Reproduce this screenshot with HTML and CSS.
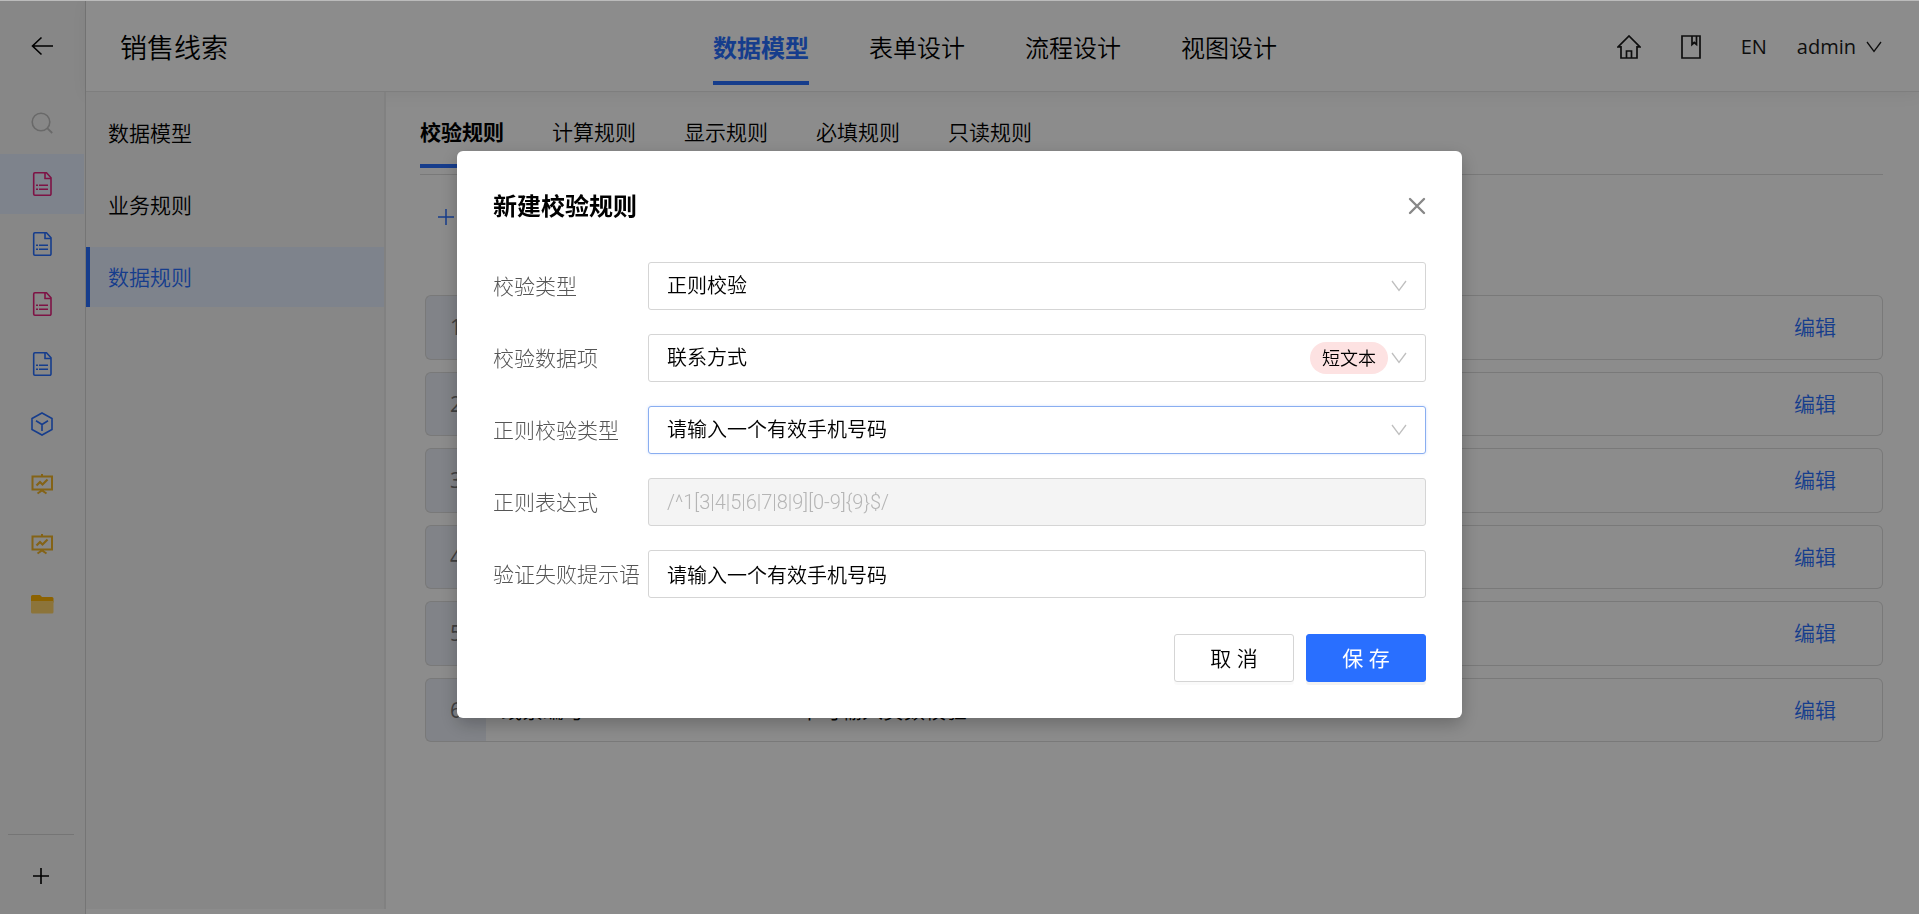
FILE: index.html
```html
<!DOCTYPE html>
<html lang="zh-CN">
<head>
  <meta charset="UTF-8">
  <title>销售线索</title>
  <link rel="stylesheet" href="styles.css">
</head>
<body>
  <svg class="sprite" aria-hidden="true">
    <symbol id="doc" viewBox="0 0 24 24">
      <path d="M4.900.8h11.600L21 5.800V22a1.200 1.200 0 0 1-1.200 1.200H4.900A1.200 1.200 0 0 1 3.700 22V2A1.200 1.200 0 0 1 4.900.8z" fill="none" stroke="currentColor" stroke-width="1.600"/>
      <path d="M15 1v5.500h6" fill="none" stroke="currentColor" stroke-width="1.600"/>
      <path d="M6 13.200h2M9 13.200h9M6 17.200h2M9 17.200h9" stroke="currentColor" stroke-width="1.600"/>
    </symbol>
    <symbol id="board" viewBox="0 0 24 24">
      <path d="M2.500 4.500h19.500v13h-19.500zM12 2v2.500M12 17.500v2M7.500 21.500l4.500-3 4.500 3" fill="none" stroke="currentColor" stroke-width="2"/>
      <path d="M6.500 13.500l3.500-3.500 2.500 2.500 5-5" fill="none" stroke="currentColor" stroke-width="2.200"/>
    </symbol>
    <symbol id="down" viewBox="0 0 16 16">
      <path d="M1 3l7 9.500L15 3" fill="none" stroke="currentColor" stroke-width="1.300"/>
    </symbol>
  </svg>

  <div class="app">
    <aside class="rail">
      <a class="rail-back" href="#" aria-label="返回"><svg width="24" height="24" viewBox="0 0 24 24"><path d="M11.500 3.500L2.500 12l9 8.500M2.500 12h20.500" fill="none" stroke="currentColor" stroke-width="1.600"/></svg></a>
      <a class="rail-search" href="#" aria-label="搜索"><svg width="24" height="24" viewBox="0 0 24 24"><circle cx="11" cy="11" r="8.800" fill="none" stroke="currentColor" stroke-width="1.600"/><path d="M17.200 17.200l5 4.800" stroke="currentColor" stroke-width="1.800"/></svg></a>
      <nav class="rail-nav">
        <a class="pink active" href="#" aria-label="表单"><svg width="24" height="24"><use href="#doc"/></svg></a>
        <a class="blue" href="#" aria-label="表单"><svg width="24" height="24"><use href="#doc"/></svg></a>
        <a class="pink" href="#" aria-label="表单"><svg width="24" height="24"><use href="#doc"/></svg></a>
        <a class="blue" href="#" aria-label="表单"><svg width="24" height="24"><use href="#doc"/></svg></a>
        <a class="blue" href="#" aria-label="模型"><svg width="24" height="24" viewBox="0 0 24 24"><path d="M12 1l10 5.500v11L12 23 2 17.500v-11zM6 8.800l6 3.700 6-3.700M12 12.500V19" fill="none" stroke="currentColor" stroke-width="1.600"/></svg></a>
        <a class="gold" href="#" aria-label="报表"><svg width="24" height="24"><use href="#board"/></svg></a>
        <a class="gold" href="#" aria-label="报表"><svg width="24" height="24"><use href="#board"/></svg></a>
        <a class="gold" href="#" aria-label="文件夹"><svg width="24" height="24" viewBox="0 0 24 24"><path d="M1 4.500a1.500 1.500 0 0 1 1.500-1.500h7.500l2 2H22A1.500 1.500 0 0 1 23.500 6.500v4H1z" fill="#ffb300"/><path d="M1 9h22.500v11A1.500 1.500 0 0 1 22 21.500H2.500A1.500 1.500 0 0 1 1 20z" fill="#ffd36b"/></svg></a>
      </nav>
      <button class="rail-add" type="button" aria-label="新增"><svg width="18" height="18" viewBox="0 0 18 18"><path d="M1 9h16M9 1v16" stroke="currentColor" stroke-width="1.600"/></svg></button>
    </aside>

    <div class="main">
      <header class="topbar">
        <h1>销售线索</h1>
        <nav class="top-tabs">
          <a class="active" href="#">数据模型</a>
          <a href="#">表单设计</a>
          <a href="#">流程设计</a>
          <a href="#">视图设计</a>
        </nav>
        <div class="tools">
          <a href="#" aria-label="首页"><svg width="24" height="24" viewBox="0 0 24 24"><path d="M4 12H1L12 1l11 11h-3M4 11v12h16V11M9.500 23v-7h5v7" fill="none" stroke="currentColor" stroke-width="1.700"/></svg></a>
          <a class="book" href="#" aria-label="文档"><svg width="20" height="24" viewBox="0 0 20 24"><path d="M1 1h18v22H1zM11 1v8.500l2.200-2 2.300 2V1" fill="none" stroke="currentColor" stroke-width="1.700"/></svg></a>
          <a href="#">EN</a>
          <button class="user" type="button">admin <svg width="16" height="16"><use href="#down"/></svg></button>
        </div>
      </header>

      <div class="body">
        <nav class="menu">
          <a href="#">数据模型</a>
          <a href="#">业务规则</a>
          <a class="active" href="#">数据规则</a>
        </nav>

        <main class="content">
          <nav class="sub-tabs">
            <a class="active" href="#">校验规则</a>
            <a href="#">计算规则</a>
            <a href="#">显示规则</a>
            <a href="#">必填规则</a>
            <a href="#">只读规则</a>
          </nav>
          <button class="new-rule" type="button" aria-label="新建"><svg width="16" height="16" viewBox="0 0 16 16"><path d="M0 8h16M8 0v16" stroke="currentColor" stroke-width="1.500"/></svg></button>
          <table class="rules">
            <tbody>
              <tr><td class="num">1</td><td class="name"></td><td></td><td class="edit"><a href="#">编辑</a></td></tr>
              <tr><td class="num">2</td><td class="name"></td><td></td><td class="edit"><a href="#">编辑</a></td></tr>
              <tr><td class="num">3</td><td class="name"></td><td></td><td class="edit"><a href="#">编辑</a></td></tr>
              <tr><td class="num">4</td><td class="name"></td><td></td><td class="edit"><a href="#">编辑</a></td></tr>
              <tr><td class="num">5</td><td class="name"></td><td></td><td class="edit"><a href="#">编辑</a></td></tr>
              <tr><td class="num">6</td><td class="name">线索编号</td><td>不可输入负数校验</td><td class="edit"><a href="#">编辑</a></td></tr>
            </tbody>
          </table>
        </main>
      </div>
    </div>
  </div>

  <div class="mask">
    <form class="modal" role="dialog" aria-labelledby="modalTitle">
      <div class="modal-head">
        <h2 id="modalTitle">新建校验规则</h2>
        <button class="close" type="button" aria-label="关闭"><svg width="18" height="18" viewBox="0 0 18 18"><path d="M2 2l14 14M16 2L2 16" stroke="currentColor" stroke-width="2.400" stroke-linecap="round"/></svg></button>
      </div>
      <div class="field">
        <label for="type">校验类型</label>
        <div class="control">
          <select id="type"><option>正则校验</option></select>
          <svg class="arrow" width="16" height="16"><use href="#down"/></svg>
        </div>
      </div>
      <div class="field">
        <label for="item">校验数据项</label>
        <div class="control">
          <select id="item"><option>联系方式</option></select>
          <span class="tag">短文本</span>
          <svg class="arrow" width="16" height="16"><use href="#down"/></svg>
        </div>
      </div>
      <div class="field">
        <label for="regType">正则校验类型</label>
        <div class="control">
          <select id="regType" class="focused"><option>请输入一个有效手机号码</option></select>
          <svg class="arrow" width="16" height="16"><use href="#down"/></svg>
        </div>
      </div>
      <div class="field">
        <label for="reg">正则表达式</label>
        <div class="control"><input id="reg" type="text" value="/^1[3|4|5|6|7|8|9][0-9]{9}$/" disabled></div>
      </div>
      <div class="field">
        <label for="tip">验证失败提示语</label>
        <div class="control"><input id="tip" type="text" value="请输入一个有效手机号码"></div>
      </div>
      <div class="modal-foot">
        <button class="btn" type="button">取 消</button>
        <button class="btn primary" type="submit">保 存</button>
      </div>
    </form>
  </div>
</body>
</html>
```
FILE: styles.css
```css
* {
    box-sizing: border-box;
}

body {
    margin: 0;
    background: #fff;
    color: #000;
    font-family: "Open Sans", "Noto Sans CJK SC", sans-serif;
    font-size: 21px;
    font-weight: 350;
    line-height: 32px;
    overflow: hidden;
}

a {
    color: inherit;
    text-decoration: none;
}

button {
    padding: 0;
    border: 0;
    background: none;
    color: inherit;
    font: inherit;
}

svg {
    display: block;
}

h1, h2 {
    margin: 0;
}

.sprite {
    display: none;
}

.app {
    display: flex;
    height: 100vh;
}

/* icon rail */
.rail {
    display: flex;
    flex: none;
    flex-direction: column;
    width: 86px;
    padding-right: 1px;
    background: #f6f6f6;
    border-right: 1px solid #d6d6d6;
}

.rail-back, .rail-search, .rail-nav a {
    display: flex;
    align-items: center;
    justify-content: center;
    height: 60px;
}

.rail-back {
    height: 92px;
}

.rail-search {
    height: 62px;
    color: #bfbfbf;
}

.rail-nav .active {
    background: #e6eeff;
}

.pink {
    color: #e6237f;
}

.blue, .new-rule, .edit a {
    color: #296fff;
}

.gold {
    color: #f0b429;
}

.rail-add {
    display: flex;
    justify-content: center;
    margin: auto 10px 0 8px;
    padding: 32px 0 29px;
    border-top: 1px solid #d6d6d6;
}

/* header */
.main {
    display: flex;
    flex: 1;
    flex-direction: column;
}

.topbar {
    display: grid;
    grid-template-columns: 1fr auto 1fr;
    height: 92px;
    padding: 0 37px 0 22px;
    border-bottom: 1px solid #e6e6e6;
    box-shadow: 0 3px 15px rgba(0, 0, 0, .06);
}

.topbar h1 {
    padding: 28px 12px;
    font-size: 27px;
    font-weight: 350;
    line-height: 40px;
}

.top-tabs {
    display: flex;
    gap: 60px;
    font-size: 24px;
}

.top-tabs a {
    height: 85px;
    padding-top: 32px;
}

.top-tabs .active {
    border-bottom: 4px solid #296fff;
    color: #296fff;
    font-weight: 700;
}

.tools {
    display: flex;
    align-items: center;
    justify-content: flex-end;
    padding-bottom: 2px;
    color: #1a1a1a;
    font-size: 20px;
    font-weight: 400;
}

.tools .book {
    margin: 0 40px;
}

.user {
    display: flex;
    align-items: center;
    gap: 10px;
    margin-left: 30px;
}

.body {
    display: flex;
    flex: 1;
}

/* side menu */
.menu {
    display: flex;
    flex-direction: column;
    gap: 12px;
    width: 300px;
    margin-bottom: 5px;
    padding-top: 11px;
    background: #f6f6f6;
    border-right: 2px solid #ececec;
}

.menu a {
    padding: 14px 18px;
    border-left: 4px solid transparent;
}

.menu .active {
    background: #e6eeff;
    border-color: #296fff;
    color: #296fff;
}

/* content */
.content {
    flex: 1;
    padding: 0 36px 0 34px;
}

.sub-tabs {
    display: flex;
    gap: 48px;
    height: 83px;
    border-bottom: 1px solid #dcdcdc;
}

.sub-tabs a {
    height: 76px;
    padding-top: 24px;
}

.sub-tabs .active {
    border-bottom: 4px solid #296fff;
    font-weight: 700;
}

.new-rule {
    display: flex;
    align-items: center;
    height: 84px;
    padding-left: 18px;
}

.rules {
    width: calc(100% - 5px);
    height: 471px;
    margin: 24px 0 0 5px;
    border-spacing: 0 12px;
    table-layout: fixed;
}

.rules td {
    padding: 0 15px;
    border: solid #dcdcdc;
    border-width: 1px 0;
}

.rules .num {
    width: 61px;
    padding: 0;
    background: #ebeff8;
    border-left-width: 1px;
    border-radius: 6px 0 0 6px;
    color: #777;
    font-weight: 400;
    text-align: center;
}

.rules .name {
    width: 298px;
}

.rules .edit {
    width: 150px;
    padding-right: 46px;
    border-right-width: 1px;
    border-radius: 0 6px 6px 0;
    text-align: right;
}

/* dialog */
.mask {
    display: flex;
    align-items: flex-start;
    justify-content: center;
    position: fixed;
    inset: 0;
    padding-top: 150px;
    background: rgba(0, 0, 0, .45);
    background-clip: padding-box;
    border-top: 1px solid #bbb;
}

.modal {
    width: 1005px;
    padding: 36px;
    background: #fff;
    border-radius: 6px;
    box-shadow: 0 6px 18px rgba(0, 0, 0, .25);
}

.modal-head {
    display: flex;
    align-items: center;
    justify-content: space-between;
    height: 38px;
    margin-bottom: 37px;
}

.modal-head h2 {
    font-size: 24px;
    font-weight: 700;
}

.close {
    color: #888;
}

.field {
    display: flex;
    align-items: center;
    margin-bottom: 24px;
}

.field label {
    width: 155px;
    color: #555;
    font-weight: 300;
}

.control {
    display: flex;
    flex: 1;
    align-items: center;
    position: relative;
}

.control select, .control input {
    width: 100%;
    height: 48px;
    padding: 0 18px;
    appearance: none;
    background: #fff;
    border: 1px solid #d5d5d5;
    border-radius: 3px;
    color: #000;
    font: inherit;
    font-size: 20px;
}

.control input:disabled {
    background: #f4f4f4;
    color: #b5b5b5;
    font-family: Roboto, "Noto Sans CJK SC", sans-serif;
    font-weight: 300;
}

.control .focused {
    border-color: #8aaef0;
    box-shadow: 0 0 3px rgba(41, 111, 255, .2);
}

.arrow {
    position: absolute;
    right: 19px;
    color: #bfbfbf;
    pointer-events: none;
}

.tag {
    position: absolute;
    right: 38px;
    padding: 0 12px;
    background: #fde2e2;
    border-radius: 16px;
    font-size: 18px;
}

.modal-foot {
    display: flex;
    gap: 12px;
    justify-content: flex-end;
    margin-top: 36px;
}

.btn {
    width: 120px;
    height: 48px;
    background: #fff;
    border: 1px solid #d5d5d5;
    border-radius: 3px;
    box-shadow: 0 3px 0 rgba(0, 0, 0, .02);
}

.primary {
    background: #296fff;
    border-color: #296fff;
    box-shadow: 0 3px 0 rgba(0, 0, 0, .05);
    color: #fff;
    font-weight: 400;
}
```
